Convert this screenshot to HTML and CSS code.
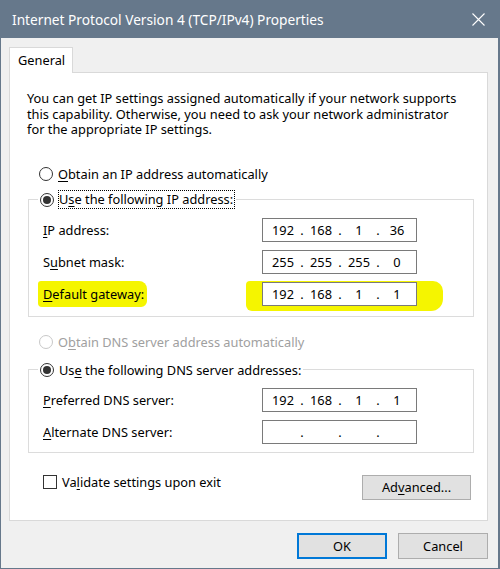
FILE: index.html
```html
<!DOCTYPE html>
<html lang="en">
<head>
  <meta charset="UTF-8">
  <title>Internet Protocol Version 4 (TCP/IPv4) Properties</title>
  <link rel="stylesheet" href="styles.css">
</head>
<body>

<div class="window">
  <div class="titlebar">
    <span class="title">Internet Protocol Version 4 (TCP/IPv4) Properties</span>
    <svg class="close" width="13" height="13" viewBox="0 0 13 13">
      <path d="M0.5 0.5 L12.5 12.5 M12.5 0.5 L0.5 12.5" stroke="#fff" stroke-width="1.1" fill="none"/>
    </svg>
  </div>

  <div class="content">
    <div class="tabs">
      <div class="tab">General</div>
    </div>

    <div class="panel">
      <p class="intro">
        <span>You can get IP settings assigned automatically if your network supports</span>
        <span>this capability. Otherwise, you need to ask your network administrator</span>
        <span>for the appropriate IP settings.</span>
      </p>

      <div class="option first">
        <span class="radio"></span>
        <span><u>O</u>btain an IP address automatically</span>
      </div>

      <fieldset class="group">
        <legend class="option">
          <span class="radio checked"></span>
          <span class="focus">U<u>s</u>e the following IP address:</span>
        </legend>
        <div class="row">
          <span class="label"><u>I</u>P address:</span>
          <div class="ip"><span>192</span><i>.</i><span>168</span><i>.</i><span>1</span><i>.</i><span>36</span></div>
        </div>
        <div class="row">
          <span class="label">S<u>u</u>bnet mask:</span>
          <div class="ip"><span>255</span><i>.</i><span>255</span><i>.</i><span>255</span><i>.</i><span>0</span></div>
        </div>
        <div class="row">
          <span class="label"><span class="marked"><u>D</u>efault gateway:</span></span>
          <div class="mark-box">
            <div class="ip"><span>192</span><i>.</i><span>168</span><i>.</i><span>1</span><i>.</i><span>1</span></div>
          </div>
        </div>
      </fieldset>

      <div class="option disabled dns-auto">
        <span class="radio"></span>
        <span>O<u>b</u>tain DNS server address automatically</span>
      </div>

      <fieldset class="group dns">
        <legend class="option">
          <span class="radio checked"></span>
          <span>Us<u>e</u> the following DNS server addresses:</span>
        </legend>
        <div class="row">
          <span class="label"><u>P</u>referred DNS server:</span>
          <div class="ip"><span>192</span><i>.</i><span>168</span><i>.</i><span>1</span><i>.</i><span>1</span></div>
        </div>
        <div class="row">
          <span class="label"><u>A</u>lternate DNS server:</span>
          <div class="ip"><span></span><i>.</i><span></span><i>.</i><span></span><i>.</i><span></span></div>
        </div>
      </fieldset>

      <div class="bottom-row">
        <div class="option check-row">
          <span class="checkbox"></span>
          <span>Va<u>l</u>idate settings upon exit</span>
        </div>
        <button class="btn advanced">Ad<u>v</u>anced...</button>
      </div>
    </div>

    <div class="buttons">
      <button class="btn default">OK</button>
      <button class="btn">Cancel</button>
    </div>
  </div>
</div>

</body>
</html>
```

FILE: styles.css
```css
/* Window frame */
body {
  margin: 0;
  font-family: 'Noto Sans', 'Open Sans', sans-serif;
  font-size: 12.8px;
  color: #000;
  background: #f0f0f0;
}

u {
  text-decoration-thickness: 1px;
  text-underline-offset: 2px;
}

.window {
  width: 500px;
  height: 569px;
  box-sizing: border-box;
  background: #f0f0f0;
  border: 1px solid #66788b;
  border-top: none;
  border-right-width: 2px;
}

.titlebar {
  height: 38px;
  background: #66788b;
  margin: 0 -2px 0 -1px;
  display: flex;
  align-items: center;
  justify-content: space-between;
  padding: 0 15px 0 12px;
}

.title {
  color: #fff;
  font-size: 13.7px;
}

.close {
  display: block;
}

.content {
  padding: 9px 10px 0 8px;
}

/* Tab strip */
.tabs {
  display: flex;
}

.tab {
  position: relative;
  z-index: 1;
  width: 64px;
  height: 26px;
  box-sizing: border-box;
  background: #fff;
  border: 1px solid #d9d9d9;
  border-bottom: none;
  padding-left: 8px;
  line-height: 25px;
  margin-bottom: -1px;
}

.panel {
  height: 449px;
  box-sizing: border-box;
  background: #fff;
  border: 1px solid #d9d9d9;
  padding: 18px 14px 0 17px;
}

.intro {
  margin: 0;
  display: flex;
  flex-direction: column;
}

.intro span {
  height: 15.5px;
  line-height: 15.5px;
  overflow: visible;
  white-space: nowrap;
}

/* Radio buttons */
.option {
  display: flex;
  align-items: center;
  height: 18px;
  gap: 5px;
}

.option.first {
  margin: 27px 0 0 12px;
}

.radio {
  width: 14px;
  height: 14px;
  box-sizing: border-box;
  border: 1px solid #333;
  border-radius: 50%;
  background: #fff;
  display: flex;
  align-items: center;
  justify-content: center;
}

.radio.checked::after {
  content: "";
  width: 8px;
  height: 8px;
  border-radius: 50%;
  background: #333;
}

.disabled {
  color: #a0a0a0;
}

.disabled .radio {
  border-color: #c8c8c8;
}

.focus {
  outline: 1px dotted #000;
  outline-offset: 0;
  line-height: 17px;
  padding-right: 1px;
}

/* Group boxes */
.group {
  margin: 8px 0 0 1px;
  width: 446px;
  box-sizing: border-box;
  border: 1px solid #dcdcdc;
  padding: 9px 14px 10px 14px;
  min-width: 0;
}

.group legend {
  padding: 0 2px;
  margin-left: -5px;
}

.group.dns {
  margin-top: 10px;
  padding-bottom: 8px;
}

.dns-auto {
  margin: 16px 0 0 12px;
}

.row {
  display: flex;
  align-items: center;
  height: 24px;
}

.row + .row {
  margin-top: 8px;
}

.label {
  width: 219px;
}

/* IP address control */
.ip {
  width: 155px;
  height: 24px;
  box-sizing: border-box;
  border: 1px solid #7a7a7a;
  background: #fff;
  display: flex;
  align-items: center;
  padding-left: 3px;
}

.ip span {
  width: 34px;
  text-align: center;
}

.ip i {
  font-style: normal;
  width: 4px;
  text-align: center;
}

/* Yellow marker strokes */
.marked {
  background: #f5f500;
  padding: 4px 3px 4px 5px;
  margin-left: -5px;
  border-radius: 3px 8px 6px 4px;
}

.mark-box {
  background: #f5f500;
  padding: 1px 26px 5px 16px;
  margin: 0 -26px -4px -16px;
  border-radius: 4px 10px 12px 6px;
}

/* Bottom of panel */
.bottom-row {
  display: flex;
  justify-content: space-between;
  align-items: flex-start;
  margin-top: 20px;
}

.check-row {
  margin-left: 16px;
}

.checkbox {
  width: 14px;
  height: 14px;
  box-sizing: border-box;
  border: 1px solid #333;
  background: #fff;
}

.btn {
  font-family: inherit;
  font-size: 12.8px;
  color: #000;
  background: #e1e1e1;
  border: 1px solid #adadad;
  width: 90px;
  height: 26px;
  padding: 0;
}

.advanced {
  width: 109px;
  height: 25px;
  margin: 2px 2px 0 0;
}

.buttons {
  display: flex;
  justify-content: flex-end;
  gap: 11px;
  margin-top: 12px;
}

.btn.default {
  border: 2px solid #0078d7;
}
```
